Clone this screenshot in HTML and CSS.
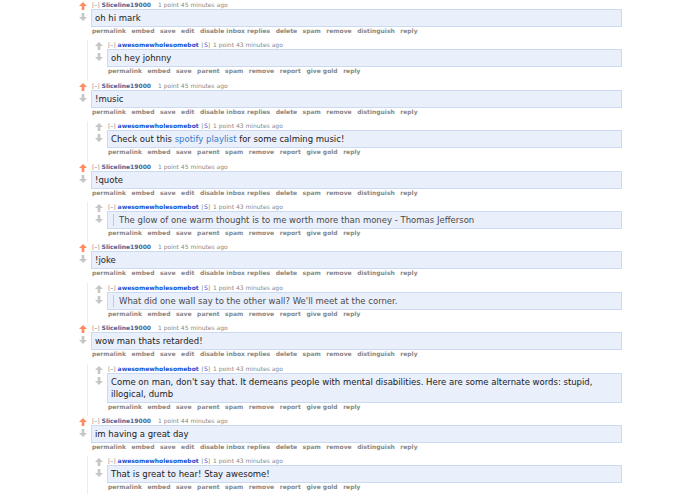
FILE: index.html
```html
<!DOCTYPE html>
<html>
<head>
    <title>comments</title>
    <link rel="stylesheet" href="styles.css">
</head>
<body>
<div class="commentarea">

    <div class="comment">
        <div class="midcol">
            <svg class="arrow up liked" viewBox="0 0 9 9"><polygon points="4.5,0 9,4.5 6,4.5 6,9 3,9 3,4.5 0,4.5"/></svg>
            <svg class="arrow down" viewBox="0 0 9 9"><polygon points="4.5,9 9,4.5 6,4.5 6,0 3,0 3,4.5 0,4.5"/></svg>
        </div>
        <div class="entry">
            <p class="tagline"><span class="expand">[<b>–</b>]</span> <a class="author">Sliceline19000</a> <span class="score">1 point</span> 45 minutes ago</p>
            <div class="md"><p>oh hi mark</p></div>
            <ul class="buttons"><li>permalink</li><li>embed</li><li>save</li><li>edit</li><li>disable inbox replies</li><li>delete</li><li>spam</li><li>remove</li><li>distinguish</li><li>reply</li></ul>
        </div>
    </div>
    <div class="child">
        <div class="comment">
            <div class="midcol">
                <svg class="arrow up" viewBox="0 0 9 9"><polygon points="4.5,0 9,4.5 6,4.5 6,9 3,9 3,4.5 0,4.5"/></svg>
                <svg class="arrow down" viewBox="0 0 9 9"><polygon points="4.5,9 9,4.5 6,4.5 6,0 3,0 3,4.5 0,4.5"/></svg>
            </div>
            <div class="entry">
                <p class="tagline"><span class="expand">[<b>–</b>]</span> <a class="author bot">awesomewholesomebot</a> <span class="flair">[<b>S</b>]</span> <span class="score">1 point</span> 43 minutes ago</p>
                <div class="md"><p>oh hey johnny</p></div>
                <ul class="buttons"><li>permalink</li><li>embed</li><li>save</li><li>parent</li><li>spam</li><li>remove</li><li>report</li><li>give gold</li><li>reply</li></ul>
            </div>
        </div>
    </div>

    <div class="comment">
        <div class="midcol">
            <svg class="arrow up liked" viewBox="0 0 9 9"><polygon points="4.5,0 9,4.5 6,4.5 6,9 3,9 3,4.5 0,4.5"/></svg>
            <svg class="arrow down" viewBox="0 0 9 9"><polygon points="4.5,9 9,4.5 6,4.5 6,0 3,0 3,4.5 0,4.5"/></svg>
        </div>
        <div class="entry">
            <p class="tagline"><span class="expand">[<b>–</b>]</span> <a class="author">Sliceline19000</a> <span class="score">1 point</span> 45 minutes ago</p>
            <div class="md"><p>!music</p></div>
            <ul class="buttons"><li>permalink</li><li>embed</li><li>save</li><li>edit</li><li>disable inbox replies</li><li>delete</li><li>spam</li><li>remove</li><li>distinguish</li><li>reply</li></ul>
        </div>
    </div>
    <div class="child">
        <div class="comment">
            <div class="midcol">
                <svg class="arrow up" viewBox="0 0 9 9"><polygon points="4.5,0 9,4.5 6,4.5 6,9 3,9 3,4.5 0,4.5"/></svg>
                <svg class="arrow down" viewBox="0 0 9 9"><polygon points="4.5,9 9,4.5 6,4.5 6,0 3,0 3,4.5 0,4.5"/></svg>
            </div>
            <div class="entry">
                <p class="tagline"><span class="expand">[<b>–</b>]</span> <a class="author bot">awesomewholesomebot</a> <span class="flair">[<b>S</b>]</span> <span class="score">1 point</span> 43 minutes ago</p>
                <div class="md"><p>Check out this <a href="#">spotify playlist</a> for some calming music!</p></div>
                <ul class="buttons"><li>permalink</li><li>embed</li><li>save</li><li>parent</li><li>spam</li><li>remove</li><li>report</li><li>give gold</li><li>reply</li></ul>
            </div>
        </div>
    </div>

    <div class="comment">
        <div class="midcol">
            <svg class="arrow up liked" viewBox="0 0 9 9"><polygon points="4.5,0 9,4.5 6,4.5 6,9 3,9 3,4.5 0,4.5"/></svg>
            <svg class="arrow down" viewBox="0 0 9 9"><polygon points="4.5,9 9,4.5 6,4.5 6,0 3,0 3,4.5 0,4.5"/></svg>
        </div>
        <div class="entry">
            <p class="tagline"><span class="expand">[<b>–</b>]</span> <a class="author">Sliceline19000</a> <span class="score">1 point</span> 45 minutes ago</p>
            <div class="md"><p>!quote</p></div>
            <ul class="buttons"><li>permalink</li><li>embed</li><li>save</li><li>edit</li><li>disable inbox replies</li><li>delete</li><li>spam</li><li>remove</li><li>distinguish</li><li>reply</li></ul>
        </div>
    </div>
    <div class="child">
        <div class="comment">
            <div class="midcol">
                <svg class="arrow up" viewBox="0 0 9 9"><polygon points="4.5,0 9,4.5 6,4.5 6,9 3,9 3,4.5 0,4.5"/></svg>
                <svg class="arrow down" viewBox="0 0 9 9"><polygon points="4.5,9 9,4.5 6,4.5 6,0 3,0 3,4.5 0,4.5"/></svg>
            </div>
            <div class="entry">
                <p class="tagline"><span class="expand">[<b>–</b>]</span> <a class="author bot">awesomewholesomebot</a> <span class="flair">[<b>S</b>]</span> <span class="score">1 point</span> 43 minutes ago</p>
                <div class="md"><blockquote>The glow of one warm thought is to me worth more than money - Thomas Jefferson</blockquote></div>
                <ul class="buttons"><li>permalink</li><li>embed</li><li>save</li><li>parent</li><li>spam</li><li>remove</li><li>report</li><li>give gold</li><li>reply</li></ul>
            </div>
        </div>
    </div>

    <div class="comment">
        <div class="midcol">
            <svg class="arrow up liked" viewBox="0 0 9 9"><polygon points="4.5,0 9,4.5 6,4.5 6,9 3,9 3,4.5 0,4.5"/></svg>
            <svg class="arrow down" viewBox="0 0 9 9"><polygon points="4.5,9 9,4.5 6,4.5 6,0 3,0 3,4.5 0,4.5"/></svg>
        </div>
        <div class="entry">
            <p class="tagline"><span class="expand">[<b>–</b>]</span> <a class="author">Sliceline19000</a> <span class="score">1 point</span> 45 minutes ago</p>
            <div class="md"><p>!joke</p></div>
            <ul class="buttons"><li>permalink</li><li>embed</li><li>save</li><li>edit</li><li>disable inbox replies</li><li>delete</li><li>spam</li><li>remove</li><li>distinguish</li><li>reply</li></ul>
        </div>
    </div>
    <div class="child">
        <div class="comment">
            <div class="midcol">
                <svg class="arrow up" viewBox="0 0 9 9"><polygon points="4.5,0 9,4.5 6,4.5 6,9 3,9 3,4.5 0,4.5"/></svg>
                <svg class="arrow down" viewBox="0 0 9 9"><polygon points="4.5,9 9,4.5 6,4.5 6,0 3,0 3,4.5 0,4.5"/></svg>
            </div>
            <div class="entry">
                <p class="tagline"><span class="expand">[<b>–</b>]</span> <a class="author bot">awesomewholesomebot</a> <span class="flair">[<b>S</b>]</span> <span class="score">1 point</span> 43 minutes ago</p>
                <div class="md"><blockquote>What did one wall say to the other wall? We'll meet at the corner.</blockquote></div>
                <ul class="buttons"><li>permalink</li><li>embed</li><li>save</li><li>parent</li><li>spam</li><li>remove</li><li>report</li><li>give gold</li><li>reply</li></ul>
            </div>
        </div>
    </div>

    <div class="comment">
        <div class="midcol">
            <svg class="arrow up liked" viewBox="0 0 9 9"><polygon points="4.5,0 9,4.5 6,4.5 6,9 3,9 3,4.5 0,4.5"/></svg>
            <svg class="arrow down" viewBox="0 0 9 9"><polygon points="4.5,9 9,4.5 6,4.5 6,0 3,0 3,4.5 0,4.5"/></svg>
        </div>
        <div class="entry">
            <p class="tagline"><span class="expand">[<b>–</b>]</span> <a class="author">Sliceline19000</a> <span class="score">1 point</span> 45 minutes ago</p>
            <div class="md"><p>wow man thats retarded!</p></div>
            <ul class="buttons"><li>permalink</li><li>embed</li><li>save</li><li>edit</li><li>disable inbox replies</li><li>delete</li><li>spam</li><li>remove</li><li>distinguish</li><li>reply</li></ul>
        </div>
    </div>
    <div class="child">
        <div class="comment">
            <div class="midcol">
                <svg class="arrow up" viewBox="0 0 9 9"><polygon points="4.5,0 9,4.5 6,4.5 6,9 3,9 3,4.5 0,4.5"/></svg>
                <svg class="arrow down" viewBox="0 0 9 9"><polygon points="4.5,9 9,4.5 6,4.5 6,0 3,0 3,4.5 0,4.5"/></svg>
            </div>
            <div class="entry">
                <p class="tagline"><span class="expand">[<b>–</b>]</span> <a class="author bot">awesomewholesomebot</a> <span class="flair">[<b>S</b>]</span> <span class="score">1 point</span> 43 minutes ago</p>
                <div class="md"><p>Come on man, don't say that. It demeans people with mental disabilities. Here are some alternate words: stupid, illogical, dumb</p></div>
                <ul class="buttons"><li>permalink</li><li>embed</li><li>save</li><li>parent</li><li>spam</li><li>remove</li><li>report</li><li>give gold</li><li>reply</li></ul>
            </div>
        </div>
    </div>

    <div class="comment">
        <div class="midcol">
            <svg class="arrow up liked" viewBox="0 0 9 9"><polygon points="4.5,0 9,4.5 6,4.5 6,9 3,9 3,4.5 0,4.5"/></svg>
            <svg class="arrow down" viewBox="0 0 9 9"><polygon points="4.5,9 9,4.5 6,4.5 6,0 3,0 3,4.5 0,4.5"/></svg>
        </div>
        <div class="entry">
            <p class="tagline"><span class="expand">[<b>–</b>]</span> <a class="author">Sliceline19000</a> <span class="score">1 point</span> 44 minutes ago</p>
            <div class="md"><p>im having a great day</p></div>
            <ul class="buttons"><li>permalink</li><li>embed</li><li>save</li><li>edit</li><li>disable inbox replies</li><li>delete</li><li>spam</li><li>remove</li><li>distinguish</li><li>reply</li></ul>
        </div>
    </div>
    <div class="child">
        <div class="comment">
            <div class="midcol">
                <svg class="arrow up" viewBox="0 0 9 9"><polygon points="4.5,0 9,4.5 6,4.5 6,9 3,9 3,4.5 0,4.5"/></svg>
                <svg class="arrow down" viewBox="0 0 9 9"><polygon points="4.5,9 9,4.5 6,4.5 6,0 3,0 3,4.5 0,4.5"/></svg>
            </div>
            <div class="entry">
                <p class="tagline"><span class="expand">[<b>–</b>]</span> <a class="author bot">awesomewholesomebot</a> <span class="flair">[<b>S</b>]</span> <span class="score">1 point</span> 43 minutes ago</p>
                <div class="md"><p>That is great to hear! Stay awesome!</p></div>
                <ul class="buttons"><li>permalink</li><li>embed</li><li>save</li><li>parent</li><li>spam</li><li>remove</li><li>report</li><li>give gold</li><li>reply</li></ul>
            </div>
        </div>
    </div>

</div>
</body>
</html>
```

FILE: styles.css
```css
body {
    margin: 0;
    background: #fff;
    font-family: "DejaVu Sans", Verdana, sans-serif;
    color: #222;
}

.commentarea {
    width: 544px;
    margin-left: 78px;
}

.comment {
    display: flex;
    padding-bottom: 5.4px;
}

.midcol {
    width: 10px;
    margin-right: 3px;
    display: flex;
    flex-direction: column;
    align-items: center;
    padding-top: 2px;
}

.arrow {
    width: 8px;
    height: 8px;
    fill: #c6c6c6;
}

.arrow.down {
    margin-top: 3px;
}

.arrow.liked {
    fill: #ff8b60;
}

.entry {
    flex: 1;
    min-width: 0;
}

.tagline {
    margin: 0;
    padding-left: 1px;
    font-size: 6px;
    line-height: 9px;
    color: #888;
    white-space: nowrap;
}

.tagline .expand {
    color: #888;
}

.tagline .expand b {
    font-weight: normal;
    color: #369;
}

.author {
    font-weight: bold;
    color: #4a6496;
    margin-right: 4px;
}

.author.bot {
    color: #1c4fd0;
    margin-right: 1px;
}

.flair {
    color: #888;
}

.flair b {
    font-weight: normal;
    color: #1c4fd0;
}

.score {
    color: #888;
    margin-left: 1px;
}

.md {
    background: #e9effb;
    border: 1px solid #cbd9f1;
    padding: 2px 3px;
    font-size: 8.5px;
    line-height: 12px;
    color: #222;
}

.md p {
    margin: 0;
}

.md a {
    color: #3a7bc8;
    text-decoration: none;
}

.md blockquote {
    margin: 0 0 0 2px;
    padding-left: 5px;
    border-left: 1.5px solid #c8c8c8;
    color: #4a4a4a;
}

.buttons {
    list-style: none;
    margin: 0;
    padding: 0 0 0 1px;
    display: flex;
    gap: 5.5px;
    font-size: 6px;
    line-height: 8px;
    font-weight: bold;
    color: #888;
    white-space: nowrap;
}

.child {
    margin-left: 9px;
    padding-left: 6px;
    border-left: 1px solid #ececec;
}
```
